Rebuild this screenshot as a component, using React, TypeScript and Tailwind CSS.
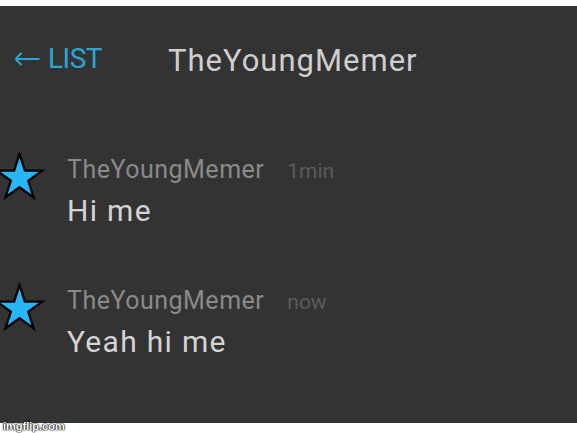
import React from 'react';

type Message = {
    id: number;
    author: string;
    time: string;
    text: string;
};

const messages: Message[] = [
    { id: 1, author: 'TheYoungMemer', time: '1min', text: 'Hi me' },
    { id: 2, author: 'TheYoungMemer', time: 'now', text: 'Yeah hi me' },
];

// five-pointed avatar star
function Star() {
    return (
        <svg width="50" height="50" viewBox="0 0 50 50" className="shrink-0 -ml-[5px]">
            <polygon
                points="24.5,2 29.9,18.6 47.3,18.6 33.3,28.8 38.6,45.4 24.5,35.2 10.4,45.4 15.8,28.8 1.7,18.6 19.1,18.6"
                fill="#29b6f6"
                stroke="#050505"
                strokeWidth="2.4"
                strokeLinejoin="miter"
            />
        </svg>
    );
}

function BackArrow() {
    return (
        <svg width="26" height="14" viewBox="0 0 26 14" className="shrink-0">
            <path d="M1.5 7H25.5M1.5 7L7.5 1M1.5 7L7.5 13" stroke="#2aa6d6" strokeWidth="2" fill="none" />
        </svg>
    );
}

export default function App() {
    return (
        <div className="w-[577px] h-[433px] bg-white font-['Roboto',sans-serif] relative overflow-hidden">
            <div className="mt-[6px] h-[417px] bg-[#333333]">
                <div className="flex items-start h-[100px] pt-[39px]">
                    <button className="ml-[14px] w-[154px] flex items-center text-[28px] tracking-[-0.5px] text-[#2aa6d6] leading-none">
                        <BackArrow />
                        <span className="ml-[8px]">LIST</span>
                    </button>
                    <h1 className="text-[31px] tracking-[1px] text-[#cfcfcf] leading-none">TheYoungMemer</h1>
                </div>

                <div className="flex flex-col gap-[57px] mt-[46px]">
                    {messages.map((m) => (
                        <div key={m.id} className="flex items-start">
                            <Star />
                            <div className="ml-[22px] pt-[5px]">
                                <div className="flex items-baseline">
                                    <span className="text-[25px] tracking-[0.5px] text-[#8a8a8a] leading-none">
                                        {m.author}
                                    </span>
                                    <span className="ml-[23px] text-[21px] text-[#5c5c5c] leading-none">{m.time}</span>
                                </div>
                                <div className="mt-[14px] text-[30px] tracking-[1.3px] text-[#d4d4d4] leading-none">
                                    {m.text}
                                </div>
                            </div>
                        </div>
                    ))}
                </div>
            </div>
            <div className="absolute left-[3px] bottom-[1px] text-[11px] leading-none text-white font-bold font-['Liberation_Sans',sans-serif] [text-shadow:0_0_2px_#000,0_0_1px_#000,0_0_1px_#000]">
                imgflip.com
            </div>
        </div>
    );
}
